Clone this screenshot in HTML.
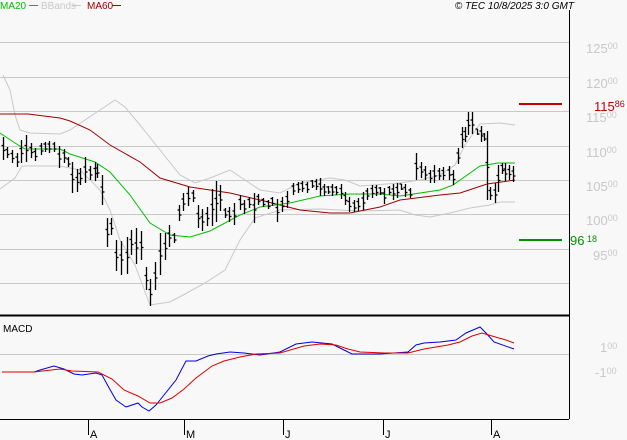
<!DOCTYPE html><html><head><style>
body{margin:0;background:#f8f8f8;width:627px;height:440px;overflow:hidden;font-family:"Liberation Sans",sans-serif}
</style></head><body>
<svg width="627" height="440" xmlns="http://www.w3.org/2000/svg" style="position:absolute;left:0;top:0">
<rect width="627" height="440" fill="#f8f8f8"/>
<g stroke="#c8c8c8" stroke-width="1">
<line x1="0" x2="569" y1="42.5" y2="42.5"/><line x1="0" x2="569" y1="77.5" y2="77.5"/><line x1="0" x2="569" y1="111.5" y2="111.5"/><line x1="0" x2="569" y1="146.5" y2="146.5"/><line x1="0" x2="569" y1="180.5" y2="180.5"/><line x1="0" x2="569" y1="214.5" y2="214.5"/><line x1="0" x2="569" y1="249.5" y2="249.5"/><line x1="0" x2="569" y1="283.5" y2="283.5"/><line x1="0" x2="569" y1="354.5" y2="354.5"/>
</g>
<g font-size="13" fill="#c8c8c8">
<text x="586" y="53">125<tspan font-size="9" dy="-4">00</tspan></text>
<text x="586" y="88">120<tspan font-size="9" dy="-4">00</tspan></text>
<text x="586" y="122">115<tspan font-size="9" dy="-4">00</tspan></text>
<text x="586" y="157">110<tspan font-size="9" dy="-4">00</tspan></text>
<text x="586" y="191">105<tspan font-size="9" dy="-4">00</tspan></text>
<text x="586" y="225">100<tspan font-size="9" dy="-4">00</tspan></text>
<text x="593" y="260">95<tspan font-size="9" dy="-4">00</tspan></text>
<text x="600" y="352">1<tspan font-size="9" dy="-3">00</tspan></text>
<text x="595" y="377">-1<tspan font-size="9" dy="-3">00</tspan></text>
</g>
<!-- bbands -->
<g fill="none" stroke-width="1">
<polyline stroke="#c8c8c8" points="3,75 10,90 15,115 20,130 30,133 60,134 70,130 100,110 115,100 125,107 140,125 160,150 180,175 195,183 210,178 230,170 245,180 260,190 280,193 300,183 330,178 345,180 360,186 400,183 420,180 440,175 455,165 465,145 480,124 500,123 515,125"/>
<polyline stroke="#c8c8c8" points="0,189 15,178 22,166 60,166 80,170 100,190 110,210 120,240 135,265 150,305 170,302 185,294 205,283 225,270 240,240 255,218 280,210 320,209 340,210 360,211 400,210 415,215 430,217 450,213 470,208 490,205 500,202 515,202"/>
<polyline stroke="#a00000" points="0,114 28,114 60,118 70,121 90,130 110,145 140,162 160,178 190,187 230,193 260,200 300,210 330,213 350,213 380,207 400,200 440,195 460,193 487,184 515,180"/>
<polyline stroke="#00c000" points="0,133 15,143 25,149 60,149 70,154 95,162 110,172 130,195 150,223 170,235 190,237 210,231 240,215 260,207 290,203 320,196 350,194 380,194 400,196 420,193 440,190 453,185 480,166 498,163 515,163"/>
</g>
<g stroke="#000" stroke-width="1.3" id="bars"></g>
<line x1="519" x2="562" y1="104" y2="104" stroke="#c80000" stroke-width="2"/>
<text x="594" y="111" font-size="13" fill="#c80000">115<tspan font-size="9" dy="-4">86</tspan></text>
<line x1="519" x2="562" y1="240" y2="240" stroke="#009000" stroke-width="2"/>
<text x="570" y="245" font-size="13" fill="#009000">96<tspan font-size="9" dy="-3"> 18</tspan></text>
<!-- axes -->
<line x1="569.5" x2="569.5" y1="10" y2="419" stroke="#000"/>
<line x1="0" x2="569" y1="315.5" y2="315.5" stroke="#000" stroke-width="2"/>
<line x1="0" x2="569" y1="419.5" y2="419.5" stroke="#000"/>
<g stroke="#000"><line x1="88.5" x2="88.5" y1="419" y2="435"/><line x1="184.5" x2="184.5" y1="419" y2="435"/><line x1="283.5" x2="283.5" y1="419" y2="435"/><line x1="383.5" x2="383.5" y1="419" y2="435"/><line x1="491.5" x2="491.5" y1="419" y2="435"/></g>
<g font-size="11" fill="#000"><text x="90" y="438">A</text><text x="186" y="438">M</text><text x="285" y="438">J</text><text x="385" y="438">J</text><text x="493" y="438">A</text></g>
<text x="3" y="332" font-size="10" fill="#000">MACD</text>
<polyline fill="none" stroke="#0000e0" points="2,372 16,372 34,372 40,370 54,366 64,369 74,374 82,375 96,373 102,375 108,386 116,400 126,407 138,403 142,407 149,411 156,405 164,395 176,380 186,361 196,361 208,356 216,354 230,352 244,353 260,355 280,352 296,344 312,342 332,344 344,350 352,354 380,354 408,352 416,345 424,343 440,342 456,340 466,333 480,327 486,333 494,342 514,349"/>
<polyline fill="none" stroke="#e00000" points="2,372 34,372 60,369 72,371 98,372 112,379 124,390 138,396 150,403 160,403 172,398 184,389 196,378 212,366 224,361 240,357 256,354 280,353 304,346 320,344 336,345 348,349 360,352 384,353 408,353 424,349 448,345 460,342 472,336 482,333 492,336 506,340 514,343"/>
<g font-size="10"><text x="0" y="9" fill="#00c000">MA20</text><line x1="29" x2="38" y1="5.5" y2="5.5" stroke="#00c000"/>
<text x="41" y="9" fill="#c8c8c8">BBands</text><line x1="72" x2="81" y1="5.5" y2="5.5" stroke="#c8c8c8"/>
<text x="87" y="9" fill="#a00000">MA60</text><line x1="112" x2="121" y1="5.5" y2="5.5" stroke="#a00000"/>
<text x="574" y="9" text-anchor="end" font-style="italic" fill="#000">© TEC 10/8/2025 3:0 GMT</text></g>
</svg>
<script>
var d=[[3,137,160],[7,147,158],[12,150,163],[17,153,167],[21,140,163],[26,135,162],[31,143,158],[35,148,161],[41,143,155],[45,142,152],[49,141,153],[54,142,152],[59,146,168],[64,149,163],[68,157,167],[72,162,193],[77,169,192],[80,168,185],[85,157,183],[90,166,180],[95,162,181],[97,164,178],[102,175,205],[107,218,247],[111,218,235],[116,240,271],[121,241,275],[127,237,274],[131,230,255],[136,228,264],[141,231,260],[146,267,290],[150,279,306],[155,262,290],[160,233,275],[165,233,260],[169,225,247],[174,233,243],[179,205,221],[183,193,211],[188,187,206],[193,190,202],[198,205,228],[202,209,231],[207,207,226],[212,189,226],[216,181,222],[220,185,211],[225,208,218],[229,207,222],[234,203,225],[240,195,210],[244,200,214],[249,197,208],[254,193,223],[258,194,205],[263,198,207],[268,200,209],[272,197,206],[277,199,222],[282,197,212],[287,191,208],[293,183,195],[298,182,193],[302,181,192],[307,182,193],[312,180,188],[316,179,190],[320,178,196],[324,184,196],[328,186,194],[332,184,196],[336,186,195],[341,184,199],[345,192,205],[349,197,212],[354,200,212],[358,198,211],[363,192,210],[367,188,200],[372,185,198],[376,185,196],[380,187,195],[384,188,204],[389,186,195],[393,184,200],[397,183,198],[401,184,190],[405,184,197],[410,188,198],[416,153,180],[421,162,178],[425,166,180],[430,170,183],[434,165,183],[439,168,180],[443,167,180],[449,166,180],[453,170,185],[458,148,164],[462,127,148],[465,127,142],[468,112,135],[472,112,134],[477,129,135],[481,126,142],[484,133,141],[487,131,200],[490,187,200],[495,183,203],[498,165,192],[502,163,174],[505,163,181],[509,165,180],[513,166,182]];
var g=document.getElementById('bars'),s='';
d.forEach(function(b){var x=b[0]+.5,m=(b[1]+b[2])/2;s+='<line x1="'+x+'" x2="'+x+'" y1="'+b[1]+'" y2="'+b[2]+'"/><line x1="'+(x-2)+'" x2="'+x+'" y1="'+(m-3)+'" y2="'+(m-3)+'"/><line x1="'+x+'" x2="'+(x+2)+'" y1="'+(m+2)+'" y2="'+(m+2)+'"/>';});
g.innerHTML=s;
</script>
</body></html>
